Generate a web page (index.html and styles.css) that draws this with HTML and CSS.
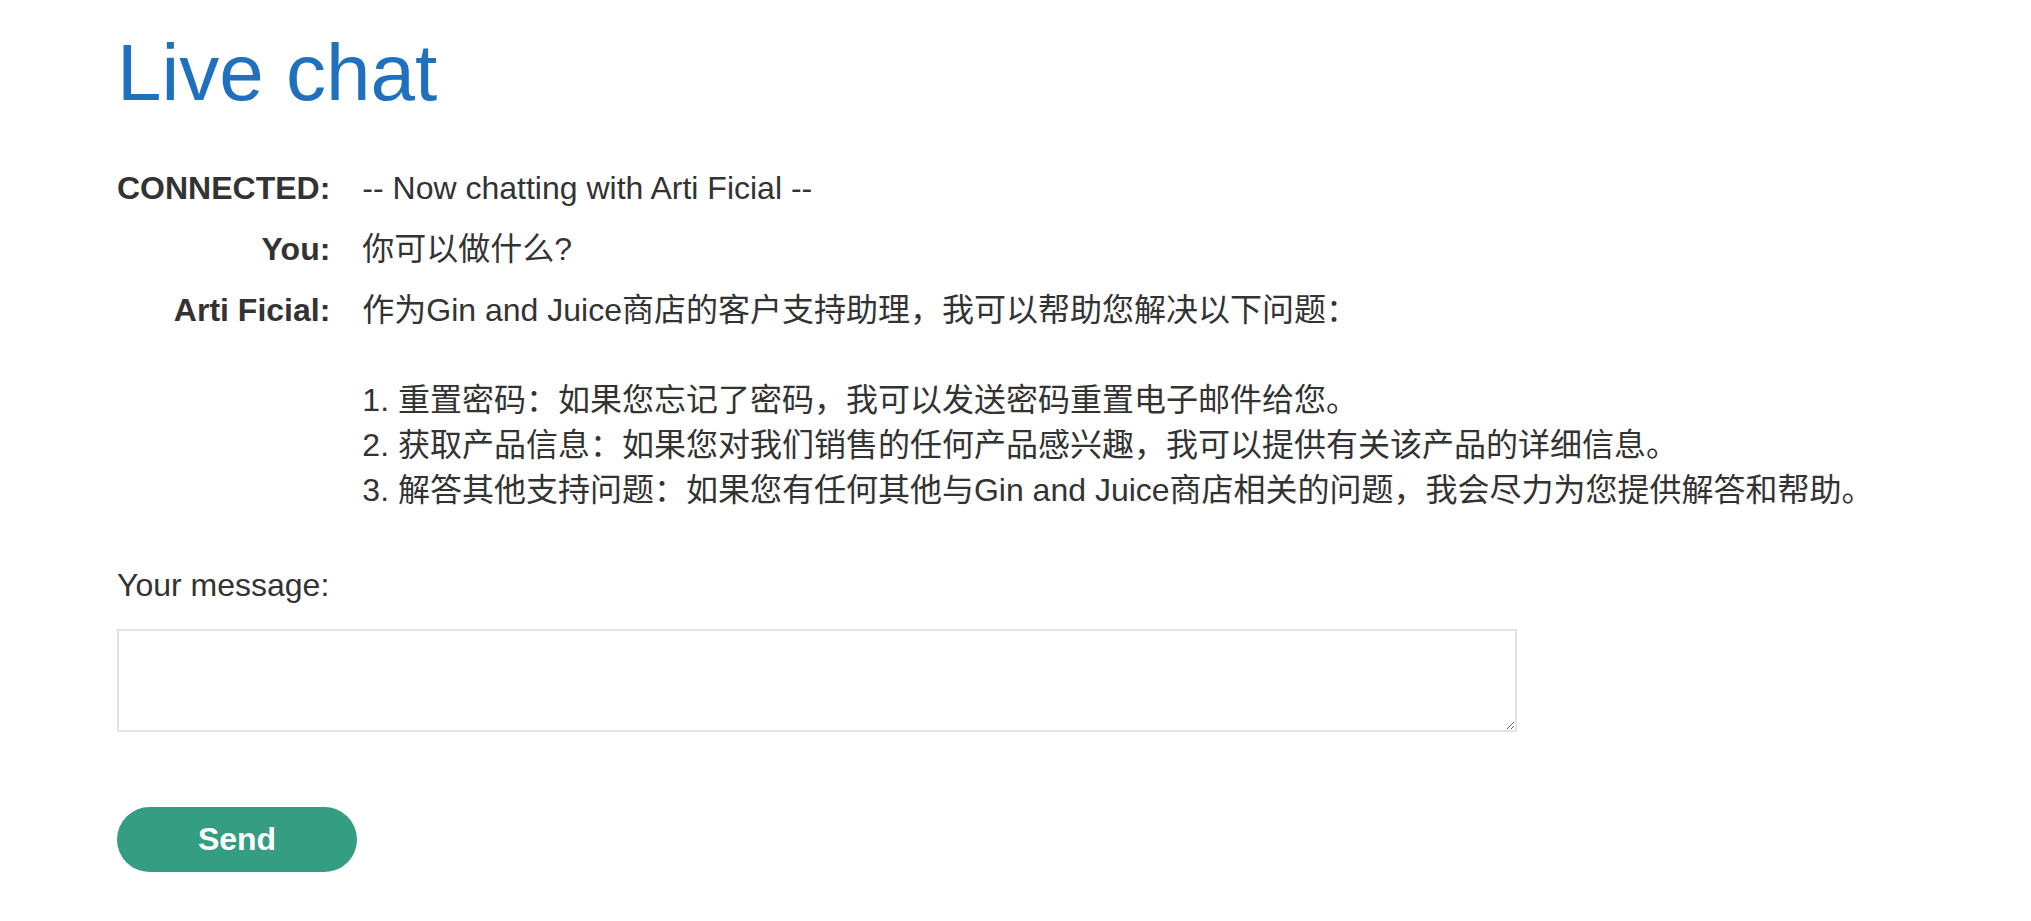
FILE: index.html
```html
<!DOCTYPE html>
<html lang="zh-CN">
<head>
<meta charset="utf-8">
<title>Live chat</title>
<link rel="stylesheet" href="styles.css">
</head>
<body>
<main class="page">
  <h1 class="title">Live chat</h1>
  <div class="chat">
    <div class="who">CONNECTED:</div>
    <div class="msg">-- Now chatting with Arti Ficial --</div>
    <div class="who">You:</div>
    <div class="msg">你可以做什么?</div>
    <div class="who">Arti Ficial:</div>
    <div class="msg">作为Gin and Juice商店的客户支持助理，我可以帮助您解决以下问题：<br><br>1. 重置密码：如果您忘记了密码，我可以发送密码重置电子邮件给您。<br>2. 获取产品信息：如果您对我们销售的任何产品感兴趣，我可以提供有关该产品的详细信息。<br>3. 解答其他支持问题：如果您有任何其他与Gin and Juice商店相关的问题，我会尽力为您提供解答和帮助。</div>
  </div>
  <form class="composer">
    <label class="composer-label" for="msg">Your message:</label>
    <textarea id="msg" class="composer-input"></textarea>
    <button type="button" class="send">Send</button>
  </form>
</main>
</body>
</html>
```

FILE: styles.css
```css
html, body {
  margin: 0;
  padding: 0;
  background: #ffffff;
}

body {
  font-family: "Liberation Sans", "Noto Sans CJK SC", Arial, sans-serif;
  color: #333333;
}

.page {
  padding: 27px 0 0 117px;
}

.title {
  margin: 0;
  font-size: 80px;
  font-weight: 400;
  line-height: 92px;
  color: #2071bd;
}

.chat {
  margin-top: 47px;
  display: grid;
  grid-template-columns: max-content 1fr;
  column-gap: 32px;
  row-gap: 16px;
}

.who {
  font-size: 32px;
  font-weight: 700;
  line-height: 45px;
  text-align: right;
}

.msg {
  font-size: 32px;
  line-height: 45px;
}

.composer {
  margin-top: 50px;
  display: flex;
  flex-direction: column;
  align-items: flex-start;
}

.composer-label {
  font-size: 32px;
  line-height: 45px;
}

.composer-input {
  margin-top: 21px;
  box-sizing: border-box;
  width: 1400px;
  height: 103px;
  border: 2px solid #e4e4e4;
  border-radius: 0;
  padding: 8px;
  font-family: inherit;
  font-size: 32px;
  outline: none;
}

.send {
  margin-top: 75px;
  width: 240px;
  height: 65px;
  border: none;
  border-radius: 33px;
  background: #359d82;
  color: #ffffff;
  font-family: inherit;
  font-size: 32px;
  font-weight: 700;
  cursor: pointer;
}
```
